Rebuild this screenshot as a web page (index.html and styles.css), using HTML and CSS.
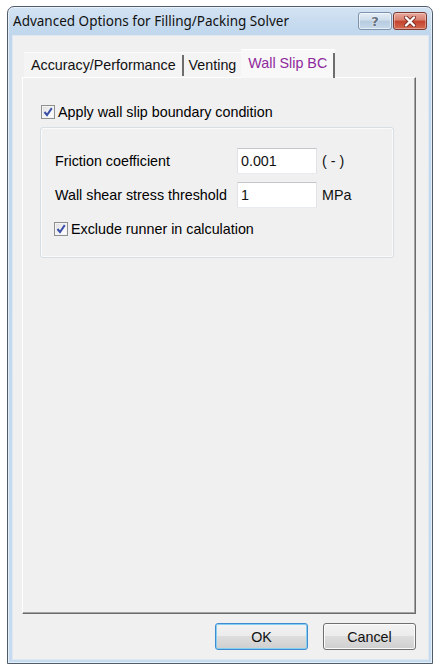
FILE: index.html
```html
<!DOCTYPE html>
<html>
<head>
<meta charset="utf-8">
<link rel="stylesheet" href="styles.css">
</head>
<body>
<div class="window">
  <div class="titlebar">
    <span class="title">Advanced Options for Filling/Packing Solver</span>
    <div class="caption-buttons">
      <span class="cap-btn help">?</span>
      <span class="cap-btn close">
        <svg width="14" height="11" viewBox="0 0 14 11">
          <path d="M3 1.5 L11 9.5 M11 1.5 L3 9.5" stroke="#7a2e24" stroke-width="4" stroke-linecap="round"/>
          <path d="M3 1.5 L11 9.5 M11 1.5 L3 9.5" stroke="#ffffff" stroke-width="2.4" stroke-linecap="round"/>
        </svg>
      </span>
    </div>
  </div>
  <div class="client">
    <div class="tabs">
      <div class="tabstrip">
        <div class="tab sep">Accuracy/Performance</div>
        <div class="tab">Venting</div>
        <div class="tab active">Wall Slip BC</div>
      </div>
      <div class="panel">
        <div class="check-row">
          <span class="checkbox">
            <svg width="10" height="10" viewBox="0 0 10 10"><path d="M1.5 5 L4 8 L8.8 1.2" fill="none" stroke="#3a4fa8" stroke-width="2"/></svg>
          </span>
          <span>Apply wall slip boundary condition</span>
        </div>
        <div class="group">
          <span class="lbl">Friction coefficient</span>
          <span class="input">0.001</span>
          <span class="unit">( - )</span>
          <span class="lbl">Wall shear stress threshold</span>
          <span class="input">1</span>
          <span class="unit">MPa</span>
          <div class="check-row span-all">
            <span class="checkbox">
              <svg width="10" height="10" viewBox="0 0 10 10"><path d="M1.5 5 L4 8 L8.8 1.2" fill="none" stroke="#3a4fa8" stroke-width="2"/></svg>
            </span>
            <span>Exclude runner in calculation</span>
          </div>
        </div>
      </div>
    </div>
    <div class="buttons">
      <button class="btn default">OK</button>
      <button class="btn">Cancel</button>
    </div>
  </div>
</div>
</body>
</html>
```
FILE: styles.css
```css
html, body {
  margin: 0;
  padding: 0;
  background: #ffffff;
}
body {
  font-family: "Liberation Sans", Arial, sans-serif;
  font-size: 14.3px;
  color: #000;
}
.window {
  box-sizing: border-box;
  margin: 6px 0 0 7px;
  width: 426px;
  height: 658px;
  border: 1px solid #4f5d6b;
  border-radius: 7px 7px 0 0;
  background: linear-gradient(#d3e3f3 0, #bfd6ec 28px, #c6dbef 100%);
  box-shadow: inset 0 0 0 1px rgba(255, 255, 255, 0.55);
  display: flex;
  flex-direction: column;
  padding: 0 3px 3px 4px;
}
.titlebar {
  height: 28px;
  flex: none;
  display: flex;
  align-items: center;
  justify-content: space-between;
}
.title {
  margin-left: 1px;
  font-family: "Noto Sans", "Open Sans", sans-serif;
  font-size: 13.5px;
  color: #111;
}
.caption-buttons {
  align-self: flex-start;
  margin-top: 5px;
  margin-right: 2px;
  display: flex;
  gap: 1px;
}
.cap-btn {
  box-sizing: border-box;
  width: 34px;
  height: 18px;
  display: flex;
  align-items: center;
  justify-content: center;
  border-radius: 3px;
}
.help {
  border: 1px solid #7d93ad;
  background: linear-gradient(#e4edf6 0, #cfdeec 45%, #b7cbe0 50%, #c7d9ea 100%);
  box-shadow: inset 0 0 0 1px rgba(255,255,255,0.6);
  font-family: "DejaVu Sans", sans-serif;
  font-weight: bold;
  font-size: 13px;
  color: #66717f;
  text-shadow: 0 0 2px #fff;
}
.close {
  border: 1px solid #7c3a30;
  background: linear-gradient(#e8a99c 0, #d8806f 45%, #c3412c 50%, #d46a52 100%);
  box-shadow: inset 0 0 0 1px rgba(255,255,255,0.35);
}
.client {
  flex: 1;
  display: flex;
  flex-direction: column;
  background: #f0f0f0;
  border: 1px solid #dfe8f1;
}
.tabs {
  flex: 1;
  display: flex;
  flex-direction: column;
  padding: 13px 12px 0 9px;
}
.tabstrip {
  height: 28px;
  display: flex;
  align-items: flex-end;
  padding-left: 2px;
}
.tab {
  box-sizing: border-box;
  height: 25px;
  display: flex;
  align-items: center;
  padding: 0 5px;
  background: #f4f4f4;
  border-top: 1px solid #fbfbfb;
  color: #111;
  font-size: 14.3px;
}
.tab.sep {
  padding: 0 8px 0 7px;
  background: linear-gradient(#6e6e6e, #6e6e6e) right 0 top 2px / 2px 21px no-repeat, #f4f4f4;
}
.tab.active {
  position: relative;
  height: 29px;
  margin-bottom: -1px;
  padding: 0 8px 2px 7px;
  background: linear-gradient(#6e6e6e, #6e6e6e) right 0 top 3px / 2px 25px no-repeat, #f8f8f8;
  border-top: 1px solid #ffffff;
  color: #8f2a9d;
}
.panel {
  flex: 1;
  border-top: 1px solid #ffffff;
  border-left: 1px solid #ffffff;
  border-right: 1px solid #6c6c6c;
  border-bottom: 1px solid #6c6c6c;
  box-shadow: inset -1px -1px 0 #a3a3a3;
  padding: 26px 20px 0 18px;
}
.check-row {
  height: 16px;
  display: flex;
  align-items: center;
}
.checkbox {
  box-sizing: border-box;
  width: 14px;
  height: 14px;
  margin-right: 3px;
  border: 1px solid #8e8f8f;
  background: linear-gradient(135deg, #dcdcdc 0, #f6f6f6 60%, #ffffff 100%);
  box-shadow: inset 0 0 0 1px #f4f4f4;
  display: flex;
  align-items: center;
  justify-content: center;
}
.group {
  box-sizing: border-box;
  margin: 7px 0 0 -1px;
  width: 354px;
  height: 131px;
  border: 1px solid #d5dfe5;
  border-radius: 3px;
  box-shadow: inset 0 0 0 1px #fafafa;
  padding: 20px 0 0 14px;
  display: grid;
  grid-template-columns: 182px 80px auto;
  grid-auto-rows: 26px;
  row-gap: 8px;
  align-items: center;
}
.lbl {
  white-space: nowrap;
}
.input {
  box-sizing: border-box;
  height: 26px;
  background: #ffffff;
  border: 1px solid #e2e3ea;
  border-top-color: #c4c6cc;
  border-bottom-color: #e8ecf0;
  display: flex;
  align-items: center;
  padding-left: 3px;
  color: #111;
}
.unit {
  margin-left: 5px;
  color: #111;
}
.span-all {
  grid-column: 1 / -1;
  margin-left: -1px;
}
.buttons {
  flex: none;
  display: flex;
  justify-content: flex-end;
  gap: 15px;
  margin: 9px 12px 9px 0;
}
.btn {
  box-sizing: border-box;
  width: 93px;
  height: 27px;
  border: 1px solid #707070;
  border-radius: 3px;
  background: linear-gradient(#f3f3f3 0, #ebebeb 50%, #dddddd 50%, #cfcfcf 100%);
  box-shadow: inset 0 0 0 1px #fbfbfb;
  font-family: "Liberation Sans", Arial, sans-serif;
  font-size: 14.3px;
  color: #111;
  padding: 0;
}
.btn.default {
  border-color: #3d8ccf;
  box-shadow: inset 0 0 0 1px #86cff3;
}
```
